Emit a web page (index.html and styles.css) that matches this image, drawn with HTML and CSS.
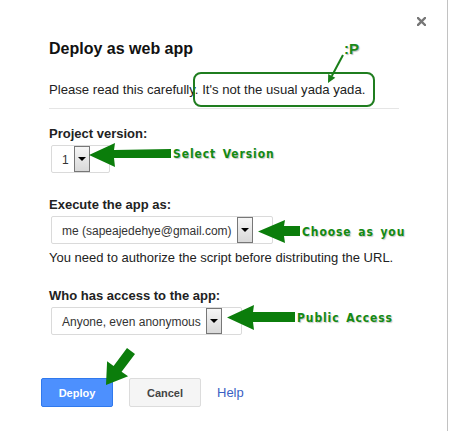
FILE: index.html
```html
<!DOCTYPE html>
<html>
<head>
<meta charset="utf-8">
<link rel="stylesheet" href="styles.css">
</head>
<body>
<div class="dialog">
  <svg class="close" width="9" height="9" viewBox="0 0 9 9"><path d="M1 1L8 8M8 1L1 8" stroke="#777" stroke-width="2.4" stroke-linecap="square"/></svg>

  <h1 class="title">Deploy as web app</h1>
  <p class="intro">Please read this carefully. <span class="hl">It's not the usual yada yada.</span></p>

  <div class="field">
    <div class="label">Project version:</div>
    <div class="select"><span class="val">1</span><span class="drop"><i></i></span></div>
  </div>

  <div class="field f2">
    <div class="label">Execute the app as:</div>
    <div class="select"><span class="val">me (sapeajedehye@gmail.com)</span><span class="drop"><i></i></span></div>
    <p class="note">You need to authorize the script before distributing the URL.</p>
  </div>

  <div class="field f3">
    <div class="label">Who has access to the app:</div>
    <div class="select"><span class="val">Anyone, even anonymous</span><span class="drop"><i></i></span></div>
  </div>

  <div class="actions">
    <button class="btn primary">Deploy</button>
    <button class="btn">Cancel</button>
    <a class="help">Help</a>
  </div>

  <!-- annotations -->
  <span class="tongue">:P</span>
  <svg class="tongue-arrow" width="30" height="40" viewBox="0 0 30 40"><path d="M23 5L11.8 26" stroke="#1a7f1a" stroke-width="2"/><path d="M8 33L8.2 24.1L15.3 27.8Z" fill="#1a7f1a"/></svg>

  <div class="callout c1">
    <svg width="82" height="24" viewBox="0 0 82 24"><path d="M0 12L26 0L25 7L82 6L82 15L25 15L26 24Z" fill="#0b7d0b"/></svg>
    <span class="ctext">Select Version</span>
  </div>
  <div class="callout c2">
    <svg width="42" height="23" viewBox="0 0 42 23"><path d="M0 11.5L27 0L26 6L42 6L42 16L26 16L27 23Z" fill="#0b7d0b"/></svg>
    <span class="ctext">Choose as you</span>
  </div>
  <div class="callout c3">
    <svg width="68" height="25" viewBox="0 0 68 25"><path d="M0 12.5L27 0L26 7L68 7L68 17L26 17L27 25Z" fill="#0b7d0b"/></svg>
    <span class="ctext">Public Access</span>
  </div>
  <svg class="deploy-arrow" width="40" height="45" viewBox="100 345 40 45"><path d="M127 348L135 354L121.6 371.7L128.1 376.3L106 385L107.1 361.3L113.6 365.9Z" fill="#0b7d0b"/></svg>
</div>
</body>
</html>
```

FILE: styles.css
```css
html, body {
  margin: 0;
  padding: 0;
  background: #fff;
}
body {
  font-family: "Liberation Sans", Arial, sans-serif;
  color: #222;
}
.dialog {
  position: relative;
  width: 448px;
  height: 431px;
  box-sizing: border-box;
  border-right: 1px solid #c2c2c2;
  padding: 39px 0 0 49px;
}
.close {
  position: absolute;
  left: 417px;
  top: 17px;
}
.title {
  margin: 0;
  font-size: 16px;
  line-height: 20px;
  font-weight: bold;
  color: #111;
}
.intro {
  margin: 23px 0 0 0;
  width: 350px;
  font-size: 13.15px;
  line-height: 16px;
  padding-bottom: 10px;
  border-bottom: 1px solid #e5e5e5;
  color: #222;
}
.hl {
  position: relative;
}
.hl::before {
  content: "";
  position: absolute;
  left: -9px;
  right: -10px;
  top: -10px;
  bottom: -10px;
  border: 2px solid #1f7d1f;
  border-radius: 8px;
}
.field {
  margin-top: 17px;
}
.f2 {
  margin-top: 24px;
}
.f3 {
  margin-top: 22px;
}
.label {
  font-size: 13px;
  line-height: 16px;
  font-weight: bold;
  color: #222;
}
.select {
  display: inline-flex;
  align-items: center;
  height: 28px;
  box-sizing: border-box;
  margin: 3px 0 0 2px;
  padding: 0 19px 0 10px;
  border: 1px solid #dadada;
  border-radius: 2px;
  background: #fff;
  gap: 5px;
}
.val {
  font-size: 12px;
  color: #333;
  line-height: 14px;
  margin-top: 2px;
}
.drop {
  width: 16px;
  height: 26px;
  box-sizing: border-box;
  border: 1px solid #777;
  background: linear-gradient(#f6f6f6, #d9d9d9);
  display: flex;
  align-items: center;
  justify-content: center;
}
.drop i {
  width: 0;
  height: 0;
  border-left: 4px solid transparent;
  border-right: 4px solid transparent;
  border-top: 4px solid #000;
}
.note {
  margin: 6px 0 0 0;
  font-size: 13px;
  line-height: 16px;
  color: #222;
}
.actions {
  margin: 43px 0 0 -8px;
  display: flex;
  align-items: center;
  gap: 16px;
}
.btn {
  width: 72px;
  height: 29px;
  box-sizing: border-box;
  border: 1px solid #dcdcdc;
  border-radius: 2px;
  background: #f5f5f5;
  color: #444;
  font-family: "Liberation Sans", Arial, sans-serif;
  font-size: 11px;
  font-weight: bold;
  padding: 0;
}
.btn.primary {
  background: #4d90fe;
  border-color: #3079ed;
  color: #fff;
}
.help {
  font-size: 13px;
  color: #3a5fc4;
  margin-top: -1px;
}
.tongue {
  position: absolute;
  left: 344px;
  top: 41px;
  font-size: 15px;
  line-height: 15px;
  font-weight: bold;
  color: #1a8a1a;
  text-shadow: 1px 1px 1px #bbb;
}
.tongue-arrow {
  position: absolute;
  left: 320px;
  top: 50px;
}
.callout {
  position: absolute;
  display: flex;
  align-items: center;
  gap: 2px;
}
.c1 { left: 89px; top: 143px; }
.c2 { left: 258px; top: 220px; }
.c3 { left: 227px; top: 305px; }
.ctext {
  font-family: "DejaVu Sans Condensed", "DejaVu Sans", sans-serif;
  font-weight: bold;
  font-size: 12px;
  letter-spacing: 0.9px;
  word-spacing: 2px;
  color: #138a13;
  text-shadow: 1px 1px 1px #c8c8c8;
  white-space: nowrap;
}
.c1 .ctext { margin-top: -2px; }
.deploy-arrow {
  position: absolute;
  left: 100px;
  top: 345px;
}
```
